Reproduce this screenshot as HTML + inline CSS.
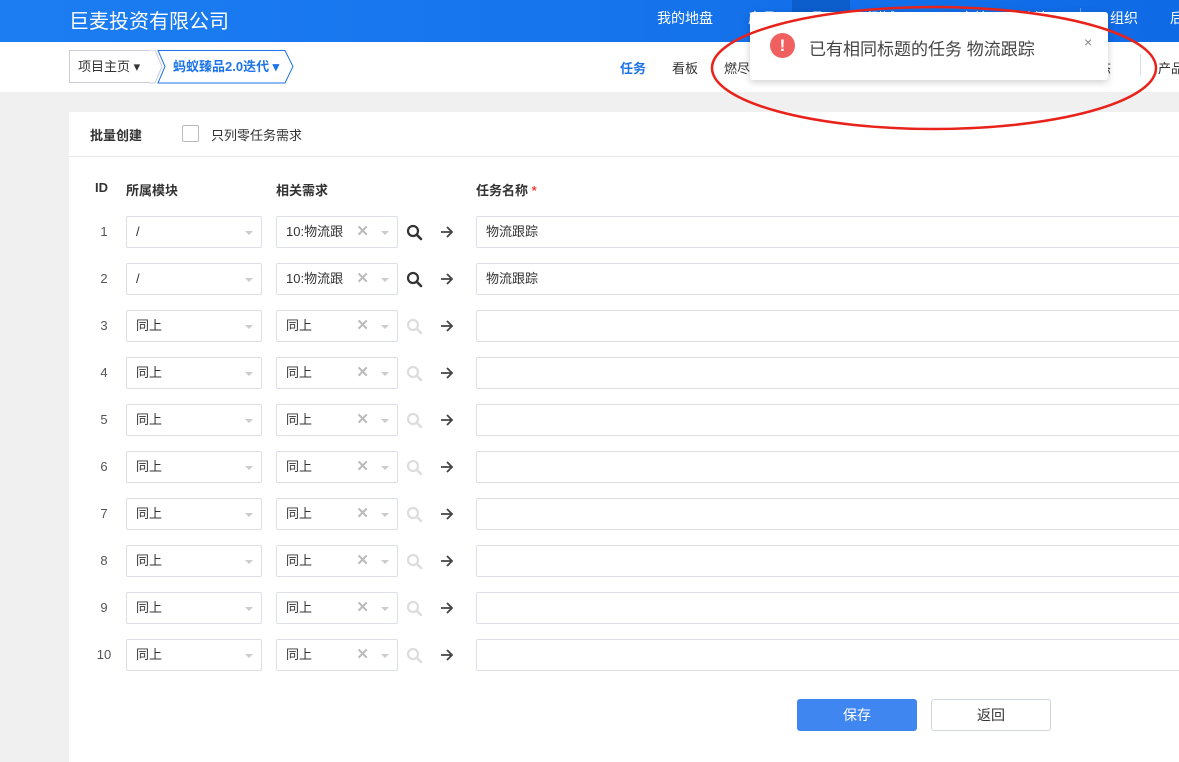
<!DOCTYPE html>
<html><head><meta charset="utf-8"><style>
*{margin:0;padding:0;box-sizing:border-box}
body{width:1179px;height:750px;overflow:hidden;background:#f0f0f0;font-family:"Liberation Sans","Noto Sans CJK SC",sans-serif;font-size:13px;color:#333;position:relative}
.a{position:absolute;white-space:nowrap}
.top{left:0;top:0;width:1179px;height:42px;background:linear-gradient(90deg,#1c7df2,#0f6ae6)}
.nav{top:0;height:42px;line-height:36px;color:#fff;font-size:14px}
.sub{left:0;top:42px;width:1179px;height:50px;background:#fff}
.card{left:69px;top:112px;width:1120px;height:650px;background:#fff}
.sel{height:32px;border:1px solid #dcdfe5;border-radius:2px;background:#fff;line-height:30px;padding-left:9px;font-size:13px;color:#333}
.car{position:absolute;right:8px;top:14px;border-left:4px solid transparent;border-right:4px solid transparent;border-top:4px solid #ccc}
.x{position:absolute;right:28px;top:0;color:#bbb;font-size:15px;font-weight:bold}
.id{width:30px;text-align:center;line-height:32px;color:#555}
.sv{position:absolute}
</style></head><body>
<div class="a top"></div>
<div class="a" style="left:69px;top:5px;color:#fff;font-size:20px">巨麦投资有限公司</div>
<div class="a" style="left:792px;top:0;width:58px;height:42px;background:#0c5ecd"></div>
<div class="a nav" style="left:657px">我的地盘</div>
<div class="a nav" style="left:748px">产品</div>
<div class="a nav" style="left:808px">项目</div>
<div class="a nav" style="left:868px">测试 ▾</div>
<div class="a nav" style="left:960px">文档</div>
<div class="a nav" style="left:1020px">统计</div>
<div class="a" style="left:1080px;top:8px;width:1px;height:18px;background:#6aa5f0"></div>
<div class="a nav" style="left:1110px">组织</div>
<div class="a nav" style="left:1170px">后台</div>
<div class="a sub"></div>
<div class="a" style="left:69px;top:50px;width:86px;height:33px;border:1px solid #ccd;border-right:none;line-height:31px;padding-left:8px;font-size:13px;color:#333">项目主页 ▾</div>
<svg class="a" style="left:150px;top:50px" width="150" height="34"><path d="M0 0 L5 0 L12 16.5 L5 33 L0 33" fill="#fff" stroke="#ccd"/><path d="M8 0.5 L135 0.5 L143 16.5 L135 33 L8 33 L15 16.5 Z" fill="#fff" stroke="#1d73e8"/></svg>
<div class="a" style="left:173px;top:50px;line-height:33px;color:#1d73e8;font-weight:bold;font-size:13px">蚂蚁臻品2.0迭代 ▾</div>
<div class="a" style="left:620px;top:58px;color:#1d73e8;font-weight:bold;font-size:13px">任务</div>
<div class="a" style="left:672px;top:58px;font-size:13px">看板</div>
<div class="a" style="left:724px;top:58px;font-size:13px">燃尽</div>
<div class="a" style="left:1098px;top:58px;font-size:13px">态</div>
<div class="a" style="left:1140px;top:54px;width:1px;height:22px;background:#ddd"></div>
<div class="a" style="left:1158px;top:58px;font-size:13px">产品</div>
<div class="a card"></div>
<div class="a" style="left:69px;top:156px;width:1110px;height:1px;background:#e8e8e8"></div>
<div class="a" style="left:90px;top:125px;font-weight:bold;font-size:13px">批量创建</div>
<div class="a" style="left:182px;top:125px;width:17px;height:17px;border:1px solid #bbb;border-radius:2px"></div>
<div class="a" style="left:211px;top:125px;font-size:13px">只列零任务需求</div>
<div class="a" style="left:95px;top:180px;font-weight:bold">ID</div>
<div class="a" style="left:126px;top:180px;font-weight:bold">所属模块</div>
<div class="a" style="left:276px;top:180px;font-weight:bold">相关需求</div>
<div class="a" style="left:476px;top:180px;font-weight:bold">任务名称 <span style="color:#e44">*</span></div>
<div id="rows"></div>
<script>
var h='';
for(var i=1;i<=10;i++){var t=216+47*(i-1);var f=i<3;var c=f?'#333':'#ddd';
h+='<div class="a" style="left:69px;top:'+t+'px;width:1110px;height:32px">'+
'<div class="a id" style="left:20px">'+i+'</div>'+
'<div class="a sel" style="left:57px;width:136px">'+(f?'/':'同上')+'<i class="car"></i></div>'+
'<div class="a sel" style="left:207px;width:122px">'+(f?'10:物流跟':'同上')+'<span class="x">✕</span><i class="car"></i></div>'+
'<svg class="sv" style="left:337px;top:8px" width="17" height="17"><circle cx="7" cy="7" r="5" fill="none" stroke="'+c+'" stroke-width="2.2"/><path d="M11 11 L15 15" stroke="'+c+'" stroke-width="2.6" stroke-linecap="round"/></svg>'+
'<svg class="sv" style="left:371px;top:10px" width="14" height="12"><path d="M1 6 H12 M7 1 L12 6 L7 11" fill="none" stroke="#444" stroke-width="1.8"/></svg>'+
'<div class="a sel" style="left:407px;width:720px">'+(f?'物流跟踪':'')+'</div></div>';}
document.getElementById('rows').innerHTML=h;
</script>
<div class="a" style="left:797px;top:699px;width:120px;height:32px;background:#3f86f0;border-radius:3px;color:#fff;text-align:center;line-height:32px;font-size:14px">保存</div>
<div class="a" style="left:931px;top:699px;width:120px;height:32px;background:#fff;border:1px solid #d0d5de;border-radius:3px;text-align:center;line-height:30px;font-size:14px">返回</div>
<div class="a" style="left:750px;top:12px;width:358px;height:68px;background:#fff;border-radius:3px;box-shadow:0 2px 8px rgba(0,0,0,.2)"></div>
<div class="a" style="left:770px;top:33px;width:25px;height:25px;border-radius:50%;background:#f06060;color:#fff;text-align:center;line-height:25px;font-weight:bold;font-size:17px">!</div>
<div class="a" style="left:809px;top:35px;font-size:17px;color:#444">已有相同标题的任务 物流跟踪</div>
<div class="a" style="left:1084px;top:34px;font-size:14px;color:#888">×</div>
<svg class="a" style="left:700px;top:5px" width="470" height="135"><ellipse cx="234" cy="63" rx="222" ry="61" fill="none" stroke="#e8231b" stroke-width="2.5"/></svg>
</body></html>
